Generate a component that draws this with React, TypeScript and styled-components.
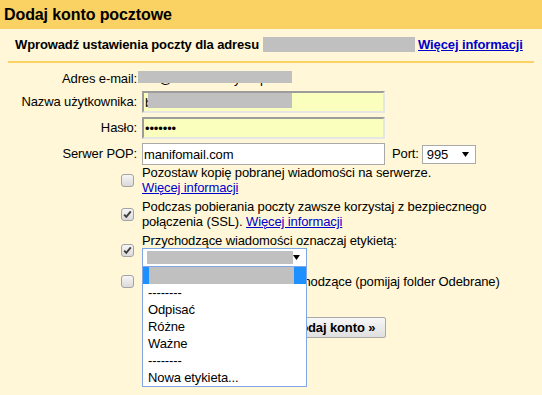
import React from "react";
import styled, { createGlobalStyle, css } from "styled-components";

const GlobalStyle = createGlobalStyle`
  html, body { margin: 0; padding: 0; }
  body {
    background: #fff7d7;
    font-family: "Liberation Sans", Arial, sans-serif;
    font-size: 13px;
    letter-spacing: -0.12px;
    color: #000;
  }
  * { box-sizing: border-box; }
`;

const Dialog = styled.div`
  width: 542px;
  height: 395px;
  background: #fff7d7;
  overflow: hidden;
`;

const Header = styled.h1`
  margin: 0;
  height: 29px;
  line-height: 29px;
  padding-left: 4px;
  background: #fad163;
  font-size: 16px;
  font-weight: bold;
  letter-spacing: -0.1px;
  color: #000;
`;

const Content = styled.div`
  padding: 0 8px;
`;

const Intro = styled.div`
  padding: 8px 7px 8px;
  border-bottom: 2px solid #fad163;
  font-weight: bold;
  line-height: 16px;
  white-space: nowrap;
`;

const Redact = styled.span<{ $w: number; $h: number }>`
  display: inline-block;
  width: ${(p) => p.$w}px;
  height: ${(p) => p.$h}px;
  background: #c0c0c0;
  vertical-align: top;
`;

const Overlay = styled(Redact)<{ $x: number; $y: number }>`
  position: absolute;
  left: ${(p) => p.$x}px;
  top: ${(p) => p.$y}px;
`;

const Link = styled.a`
  color: #0000cc;
  text-decoration: underline;
  cursor: pointer;
`;

const Form = styled.div`
  display: grid;
  grid-template-columns: 129px auto;
  column-gap: 1px;
  row-gap: 4px;
  margin-top: 8px;
  align-items: center;
`;

const Label = styled.label`
  text-align: right;
  white-space: nowrap;
  line-height: 16px;
`;

const Value = styled.div`
  display: flex;
  align-items: center;
  line-height: 16px;
  white-space: nowrap;
`;

const Masked = styled.span`
  position: relative;
  display: inline-block;
`;

const Field = styled.span`
  position: relative;
  display: inline-block;
  margin-left: 4px;
`;

const TextInput = styled.input<{ $autofill?: boolean }>`
  display: block;
  width: 243px;
  height: 22px;
  padding: 0 1px;
  font: 13px "Liberation Sans", Arial, sans-serif;
  letter-spacing: -0.12px;
  color: #000;
  outline: none;
  ${(p) =>
    p.$autofill
      ? css`
          background: #faffbd;
          border-style: solid;
          border-width: 2px;
          border-color: #9c9c9c #e6e6e6 #e6e6e6 #9c9c9c;
        `
      : css`
          background: #fff;
          border: 1px solid #a9a9a9;
        `}
`;

const PortLabel = styled.span`
  margin-left: 7px;
  margin-right: 3px;
`;

const SelectBox = styled.div<{ $w: number; $focus?: boolean }>`
  position: relative;
  display: flex;
  align-items: center;
  justify-content: space-between;
  width: ${(p) => p.$w}px;
  height: 19px;
  padding: 0 6px 0 4px;
  background: #fff;
  border: 1px solid ${(p) => (p.$focus ? "#7fa6e6" : "#a9a9a9")};
  line-height: 17px;
`;

const Arrow = () => (
  <svg width="7" height="5" viewBox="0 0 7 5">
    <polygon points="0,0 7,0 3.5,5" fill="#000" />
  </svg>
);

const Options = styled.div`
  margin-left: 113px;
  display: flex;
  flex-direction: column;
  gap: 4px;
`;

const Option = styled.div<{ $extra?: number }>`
  display: grid;
  grid-template-columns: 13px 1fr;
  column-gap: 8px;
  align-items: center;
  line-height: 15px;
  padding-bottom: ${(p) => p.$extra ?? 0}px;
  white-space: nowrap;
`;

const Box = styled.span`
  display: block;
  width: 13px;
  height: 13px;
  border: 1px solid #a3a3a3;
  border-radius: 3px;
  background: linear-gradient(#f6f6f6, #dadada);
`;

const Checkbox = ({ checked }: { checked?: boolean }) => (
  <Box>
    {checked && (
      <svg width="11" height="11" viewBox="0 0 11 11" style={{ display: "block" }}>
        <path d="M2.2 5.6 L4.3 7.9 L8.8 2.4" stroke="#3c3c3c" strokeWidth="1.9" fill="none" />
      </svg>
    )}
  </Box>
);

const OptionText = styled.div`
  white-space: normal;
`;

const LabelSelect = styled.div`
  position: relative;
`;

const DropList = styled.ul`
  position: absolute;
  z-index: 10;
  top: calc(100% - 1px);
  left: 0;
  width: 165px;
  margin: 0;
  padding: 0;
  list-style: none;
  background: #fff;
  border: 1px solid #7fa6e6;
`;

const DropItem = styled.li<{ $active?: boolean }>`
  position: relative;
  height: 17px;
  line-height: 17px;
  padding-left: 5px;
  background: ${(p) => (p.$active ? "#1e90ff" : "#fff")};
  color: #000;
`;

const Buttons = styled.div`
  margin-left: 134px;
  margin-top: 28px;
  display: flex;
  gap: 3px;
`;

const Button = styled.button<{ $primary?: boolean }>`
  height: 21px;
  padding: 0 10px;
  font: ${(p) => (p.$primary ? "bold" : "normal")} 13px "Liberation Sans", Arial, sans-serif;
  letter-spacing: -0.12px;
  line-height: 19px;
  color: #000;
  border: 1px solid #a9a9a9;
  border-radius: 2px;
  background: linear-gradient(#f7f7f7, #dfdfdf);
  white-space: nowrap;
`;

export default function App() {
  return (
    <>
      <GlobalStyle />
      <Dialog>
        <Header>Dodaj konto pocztowe</Header>
        <Content>
          <Intro>
            Wprowadź ustawienia poczty dla adresu <Redact $w={152} $h={15} /> <Link>Więcej informacji</Link>
          </Intro>

          <Form>
            <Label>Adres e-mail:</Label>
            <Value>
              <Masked>
                biur@manifomailybiz.pl
                <Overlay $x={0} $y={0} $w={154} $h={12} />
              </Masked>
            </Value>

            <Label>Nazwa użytkownika:</Label>
            <Value>
              <Field>
                <TextInput $autofill defaultValue="b" />
                <Overlay $x={6} $y={2} $w={144} $h={15} />
              </Field>
            </Value>

            <Label>Hasło:</Label>
            <Value>
              <Field>
                <TextInput $autofill type="password" defaultValue="haslo12" />
              </Field>
            </Value>

            <Label>Serwer POP:</Label>
            <Value>
              <Field>
                <TextInput defaultValue="manifomail.com" />
              </Field>
              <PortLabel>Port:</PortLabel>
              <SelectBox $w={54}>
                <span>995</span>
                <Arrow />
              </SelectBox>
            </Value>
          </Form>

          <Options>
            <Option>
              <Checkbox />
              <OptionText>
                Pozostaw kopię pobranej wiadomości na serwerze.
                <br />
                <Link>Więcej informacji</Link>
              </OptionText>
            </Option>
            <Option>
              <Checkbox checked />
              <OptionText>
                Podczas pobierania poczty zawsze korzystaj z bezpiecznego
                <br />
                połączenia (SSL). <Link>Więcej informacji</Link>
              </OptionText>
            </Option>
            <Option $extra={3}>
              <Checkbox checked />
              <OptionText>
                Przychodzące wiadomości oznaczaj etykietą:
                <LabelSelect>
                  <SelectBox $w={165} $focus>
                    <Redact $w={147} $h={13} />
                    <Arrow />
                  </SelectBox>
                  <DropList>
                    <DropItem $active>
                      <Overlay $x={6} $y={0} $w={145} $h={17} />
                    </DropItem>
                    <DropItem>--------</DropItem>
                    <DropItem>Odpisać</DropItem>
                    <DropItem>Różne</DropItem>
                    <DropItem>Ważne</DropItem>
                    <DropItem>--------</DropItem>
                    <DropItem>Nowa etykieta...</DropItem>
                  </DropList>
                </LabelSelect>
              </OptionText>
            </Option>
            <Option>
              <Checkbox />
              <OptionText>Archiwizuj wiadomości przychodzące (pomijaj folder Odebrane)</OptionText>
            </Option>
          </Options>

          <Buttons>
            <Button>Anuluj</Button>
            <Button>« Wstecz</Button>
            <Button $primary>Dodaj konto »</Button>
          </Buttons>
        </Content>
      </Dialog>
    </>
  );
}
